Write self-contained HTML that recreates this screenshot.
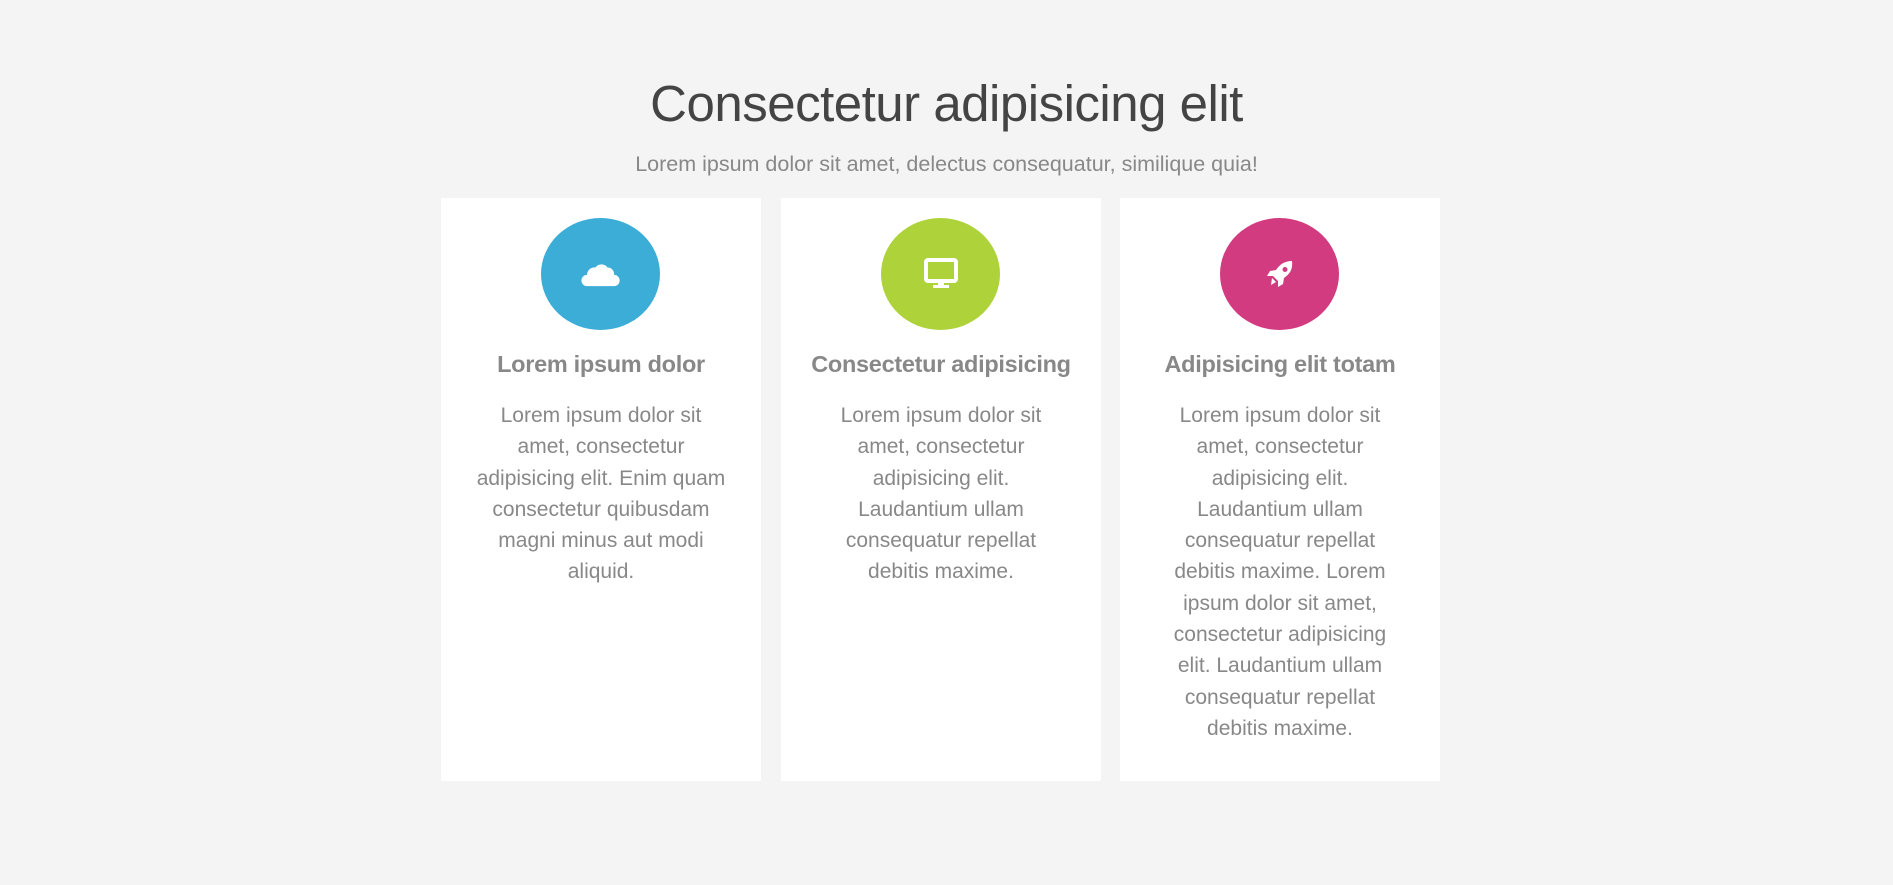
<!DOCTYPE html>
<html><head><meta charset="utf-8"><style>
body{margin:0;background:#f4f4f4;font-family:"Liberation Sans",sans-serif;width:1893px;height:885px;position:relative;overflow:hidden}
h1{position:absolute;top:74px;left:0;width:1893px;text-align:center;margin:0;font-weight:normal;font-size:51px;color:#444;line-height:60px;letter-spacing:-0.5px}
.sub{position:absolute;top:151px;left:0;width:1893px;text-align:center;font-size:21.5px;color:#888;line-height:26px}
.card{position:absolute;top:198px;width:320px;height:583px;background:#fff;text-align:center}
.circ{position:absolute;left:100px;top:20px;width:119px;height:112px;border-radius:50%;display:flex;align-items:center;justify-content:center}
.card h3{position:absolute;margin:0;left:0;width:320px;top:151px;font-size:23.5px;font-weight:bold;color:#888;line-height:30px;letter-spacing:-0.3px}
.card p{position:absolute;top:202px;left:-20px;width:360px;margin:0;font-size:21px;line-height:31.3px;color:#888}
</style></head><body>
<h1>Consectetur adipisicing elit</h1>
<div class="sub">Lorem ipsum dolor sit amet, delectus consequatur, similique quia!</div>

<div class="card" style="left:441px">
<div class="circ" style="background:#3badd6"><svg width="40" height="28" viewBox="0 0 42 30"><path fill="#fff" d="M6 28a6 6 0 0 1 0-12 8 8 0 0 1 9-8 8 8 0 0 1 13 0 7 7 0 0 1 7 8 6 6 0 0 1 0 12z"/></svg></div>
<h3>Lorem ipsum dolor</h3>
<p>Lorem ipsum dolor sit<br>amet, consectetur<br>adipisicing elit. Enim quam<br>consectetur quibusdam<br>magni minus aut modi<br>aliquid.</p>
</div>

<div class="card" style="left:781px">
<div class="circ" style="background:#aed23a"><svg width="36" height="32" viewBox="0 0 36 32"><rect x="3" y="2" width="30" height="21" rx="2" fill="none" stroke="#fff" stroke-width="4"/><rect x="15" y="23" width="6" height="5" fill="#fff"/><rect x="10" y="27" width="16" height="3" fill="#fff"/></svg></div>
<h3>Consectetur adipisicing</h3>
<p>Lorem ipsum dolor sit<br>amet, consectetur<br>adipisicing elit.<br>Laudantium ullam<br>consequatur repellat<br>debitis maxime.</p>
</div>

<div class="card" style="left:1120px">
<div class="circ" style="background:#d33b80"><svg width="32" height="32" viewBox="0 0 32 32"><path fill="#fff" d="M28 3c-7 0-12 3-16 9l-6 1-3 5 6 0 5 5 0 6 5-3 1-6c6-4 9-9 8-17zM21 9a2.5 2.5 0 1 1 0 5 2.5 2.5 0 0 1 0-5zM8 20l4 4-5 3z"/></svg></div>
<h3>Adipisicing elit totam</h3>
<p>Lorem ipsum dolor sit<br>amet, consectetur<br>adipisicing elit.<br>Laudantium ullam<br>consequatur repellat<br>debitis maxime. Lorem<br>ipsum dolor sit amet,<br>consectetur adipisicing<br>elit. Laudantium ullam<br>consequatur repellat<br>debitis maxime.</p>
</div>
</body></html>
